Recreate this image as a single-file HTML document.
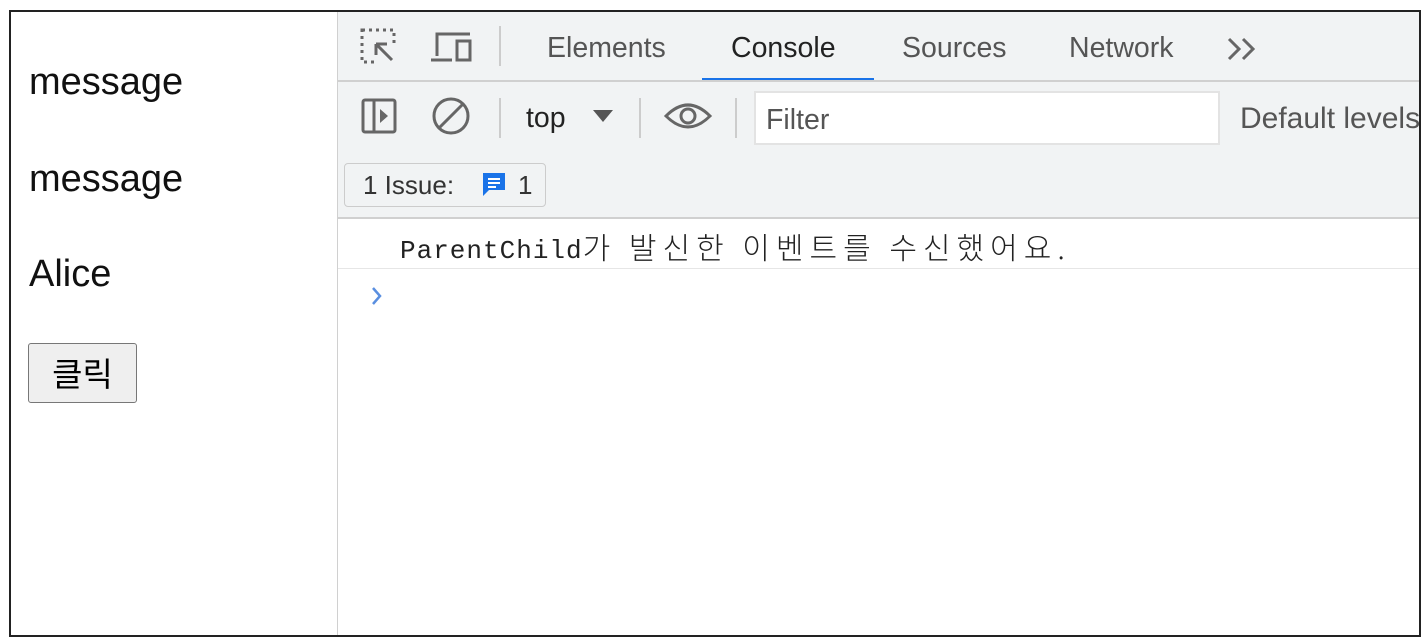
<!DOCTYPE html>
<html><head><meta charset="utf-8"><style>
body{margin:0;width:1428px;height:644px;background:#fff;position:relative;overflow:hidden;font-family:"Liberation Sans","Noto Sans CJK KR",sans-serif}
.frame{position:absolute;left:9px;top:10px;width:1408px;height:623px;border:2px solid #222;overflow:hidden}
.left{position:absolute;left:0;top:0;width:326px;height:100%;border-right:1px solid #d0d0d0}
.lt{position:absolute;left:18px;font-size:38px;color:#111}
.btn{position:absolute;left:17px;top:331px;width:107px;height:58px;border:1px solid #777;border-radius:3px;background:#efefef;font-size:33px;text-align:center;line-height:56px;font-family:"Noto Sans CJK KR",sans-serif}
.dt{position:absolute;left:327px;top:0;right:0;bottom:0}
.bar{position:absolute;left:0;right:0;background:#f1f3f4}
.t{position:absolute;font-size:28.5px;color:#555;top:20px;white-space:nowrap}
.g{fill:none;stroke:#666;stroke-width:3}
.sep{position:absolute;width:2px;background:#ccc}
</style></head><body>
<div class="frame">
<div class="left">
<div class="lt" style="top:49px">message</div>
<div class="lt" style="top:146px">message</div>
<div class="lt" style="top:241px">Alice</div>
<div class="btn">클릭</div>
</div>
<div class="dt">
<div class="bar" style="top:0;height:68px;border-bottom:2px solid #d0d0d0"></div>
<svg style="position:absolute;left:22px;top:16px" width="120" height="40">
<rect x="2" y="2" width="32" height="32" class="g" stroke-dasharray="3 4"/>
<rect x="16" y="16" width="20" height="20" fill="#f1f3f4"/>
<path d="M16 16 L32 32 M16 16 L16 27 M16 16 L27 16" class="g"/>
<path d="M77 28 V6 H110" class="g"/><path d="M71 32 H92" class="g"/><rect x="97" y="13" width="13" height="19" class="g"/>
</svg>
<div class="sep" style="left:161px;top:14px;height:40px"></div>
<div class="t" style="left:209px">Elements</div>
<div class="t" style="left:393px;color:#222">Console</div>
<div style="position:absolute;left:364px;top:66px;width:172px;height:2px;background:#1a73e8"></div>
<div class="t" style="left:564px">Sources</div>
<div class="t" style="left:731px">Network</div>
<svg style="position:absolute;left:888px;top:24px" width="34" height="26"><path d="M3 3 L13 13 L3 23 M17 3 L27 13 L17 23" fill="none" stroke="#666" stroke-width="3"/></svg>
<div class="bar" style="top:70px;height:135px;border-bottom:2px solid #d0d0d0"></div>
<svg style="position:absolute;left:22px;top:84px" width="400" height="44">
<rect x="3" y="4" width="32" height="32" rx="2" class="g"/><path d="M14 4 V36" class="g"/><path d="M20 13 L28 20 L20 27Z" fill="#666"/>
<circle cx="91" cy="20" r="17" class="g"/><path d="M79 32 L103 8" class="g"/>
<path d="M233 14 H253 L243 26Z" fill="#555"/>
<path d="M306 20 Q328 -2 350 20 Q328 42 306 20Z" class="g"/><circle cx="328" cy="20" r="7" class="g"/>
</svg>
<div class="sep" style="left:161px;top:86px;height:40px"></div>
<div class="t" style="left:188px;top:90px;color:#222">top</div>
<div class="sep" style="left:301px;top:86px;height:40px"></div>
<div class="sep" style="left:397px;top:86px;height:40px"></div>
<div style="position:absolute;left:416px;top:79px;width:462px;height:50px;background:#fff;border:2px solid #e3e3e3"></div>
<div class="t" style="left:428px;top:92px">Filter</div>
<div class="t" style="left:902px;top:90px;font-size:30px">Default levels</div>
<div style="position:absolute;left:6px;top:151px;width:200px;height:42px;border:1px solid #ccc;border-radius:4px;background:#f1f3f4"></div>
<div class="t" style="left:25px;top:158px;font-size:26px;color:#333">1 Issue:</div>
<svg style="position:absolute;left:143px;top:159px" width="26" height="26"><path d="M2 2 H24 V19 H8 L2 25Z" fill="#1a73e8"/><path d="M7 8 H19 M7 12 H19 M7 16 H15" stroke="#fff" stroke-width="2"/></svg>
<div class="t" style="left:180px;top:158px;font-size:26px;color:#333">1</div>
<div style="position:absolute;left:62px;top:214px;font-size:26px;line-height:40px;color:#222;white-space:nowrap;font-family:'Liberation Mono','Noto Sans CJK KR',monospace;letter-spacing:1px">ParentChild<span style="font-family:'Noto Sans CJK KR',monospace;font-size:30px;letter-spacing:6px;font-weight:300;vertical-align:-1px">가 발신한 이벤트를 수신했어요.</span></div>
<div style="position:absolute;left:0;right:0;top:256px;height:1px;background:#e6e6e6"></div>
<svg style="position:absolute;left:32px;top:274px" width="14" height="20"><path d="M3 2 L10 10 L3 18" fill="none" stroke="#5a8fe0" stroke-width="2.5"/></svg>
</div>
</div>
</body></html>
